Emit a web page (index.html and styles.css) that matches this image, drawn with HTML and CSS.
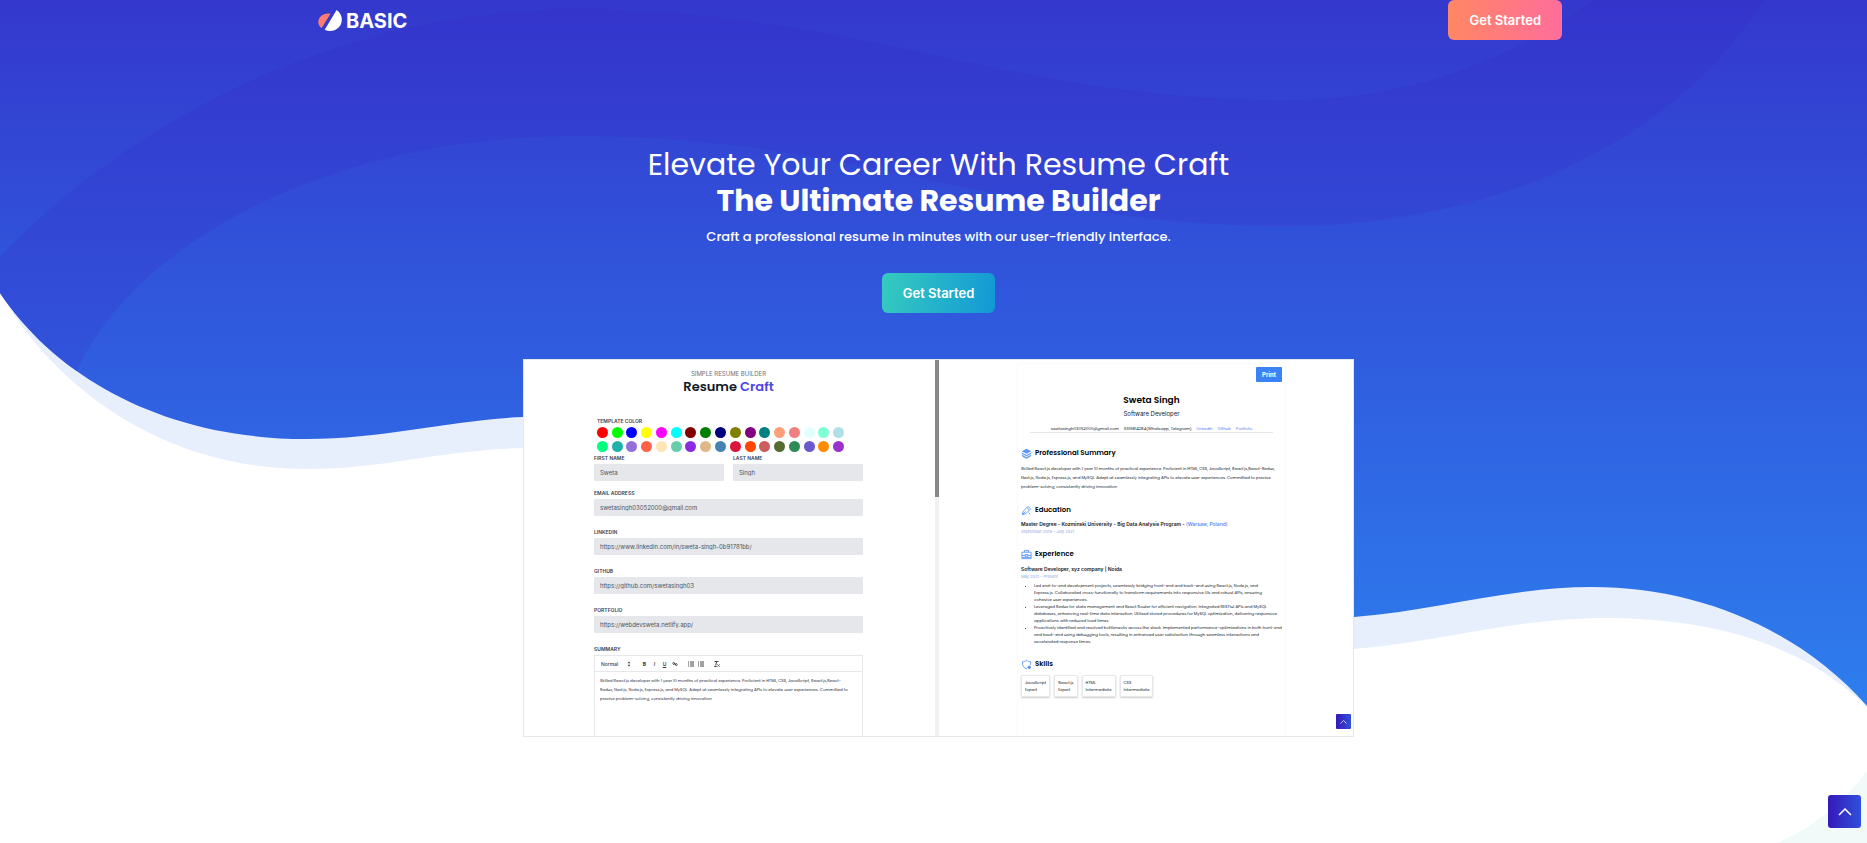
FILE: index.html
```html
<!DOCTYPE html>
<html lang="en">
<head>
<meta charset="utf-8">
<meta name="viewport" content="width=device-width, initial-scale=1">
<title>Resume Craft</title>
<link rel="stylesheet" href="styles.css">
</head>
<body>
<div class="page">
  <svg class="waves" viewBox="0 0 1867 843" preserveAspectRatio="none" aria-hidden="true">
    <defs>
      <linearGradient id="base" gradientUnits="userSpaceOnUse" x1="0" y1="0" x2="0" y2="706">
        <stop offset="0" stop-color="#3438cd"/><stop offset=".42" stop-color="#3057dc"/><stop offset="1" stop-color="#2e7eee"/>
      </linearGradient>
      <linearGradient id="band" gradientUnits="userSpaceOnUse" x1="0" y1="0" x2="0" y2="371">
        <stop offset="0" stop-color="#3434cb"/><stop offset="1" stop-color="#3154db"/>
      </linearGradient>
      <clipPath id="hero-clip">
        <path d="M0 0V293C60 382 170 439 306 439C385 439 450 420 523 417L1354 617C1440 610 1510 587 1592 587C1695 587 1797 627 1867 706V0Z"/>
      </clipPath>
    </defs>
    <path fill="#e7eefc" d="M0 293C60 395 170 469 306 469C385 469 440 450 523 448L1354 649C1440 642 1515 618 1606 618C1705 618 1800 641 1867 707V0H0Z"/>
    <g clip-path="url(#hero-clip)">
      <rect width="1867" height="720" fill="url(#base)"/>
      <path fill="url(#band)" d="M0 257C115 135 320 12 571 9C860 9 1010 100 1284 100C1410 100 1510 60 1593 0H1764C1668 152 1480 226 1286 226C1010 226 860 136 577 136C320 136 130 250 77 371L60 420H0Z"/>
    </g>
    <path fill="#f1faf9" d="M1867 771C1842 803 1816 826 1777 843H1867Z"/>
  </svg>

  <header class="header">
    <a class="brand" href="#top">
      <svg class="brand-mark" viewBox="0 0 24 22" aria-hidden="true">
        <path fill="#ff7d6e" d="M12.500 3.800C6 2-.5 7 .4 13c.4 2.500 1.600 4 3.300 5.100Z"/>
        <path fill="#fff" d="M18.600 0C25 4.500 25.300 12.500 20.800 17.300C16.500 21.600 11 22 6.700 19.800Z"/>
      </svg>
      <span>BASIC</span>
    </a>
    <a class="btn btn-coral" href="#start">Get Started</a>
  </header>

  <main class="hero" id="top">
    <h1 class="headline">Elevate Your Career With Resume Craft <strong>The Ultimate Resume Builder</strong></h1>
    <p class="tagline">Craft a professional resume in minutes with our user-friendly interface.</p>
    <a class="btn btn-teal" id="start" href="#builder">Get Started</a>

    <section class="shot" id="builder" aria-label="Resume builder">
      <form class="builder">
        <p class="eyebrow">SIMPLE RESUME BUILDER</p>
        <h2 class="title">Resume <span>Craft</span></h2>
        <p class="label label-swatches">TEMPLATE COLOR</p>
        <div class="swatches">
          <button type="button" class="dot" aria-label="Red" style="background:#ff0000"></button>
          <button type="button" class="dot" aria-label="Lime" style="background:#00ff00"></button>
          <button type="button" class="dot" aria-label="Blue" style="background:#0000ff"></button>
          <button type="button" class="dot" aria-label="Yellow" style="background:#ffff00"></button>
          <button type="button" class="dot" aria-label="Magenta" style="background:#ff00ff"></button>
          <button type="button" class="dot" aria-label="Cyan" style="background:#00ffff"></button>
          <button type="button" class="dot" aria-label="Maroon" style="background:#800000"></button>
          <button type="button" class="dot" aria-label="Green" style="background:#008000"></button>
          <button type="button" class="dot" aria-label="Navy" style="background:#000080"></button>
          <button type="button" class="dot" aria-label="Olive" style="background:#808000"></button>
          <button type="button" class="dot" aria-label="Purple" style="background:#800080"></button>
          <button type="button" class="dot" aria-label="Teal" style="background:#008080"></button>
          <button type="button" class="dot" aria-label="Light salmon" style="background:#ffa07a"></button>
          <button type="button" class="dot" aria-label="Light coral" style="background:#f08080"></button>
          <button type="button" class="dot" aria-label="Light cyan" style="background:#e0ffff"></button>
          <button type="button" class="dot" aria-label="Aquamarine" style="background:#7fffd4"></button>
          <button type="button" class="dot" aria-label="Powder blue" style="background:#b0e0e6"></button>
          <button type="button" class="dot" aria-label="Spring green" style="background:#00ff7f"></button>
          <button type="button" class="dot" aria-label="Light sea green" style="background:#20b2aa"></button>
          <button type="button" class="dot" aria-label="Medium purple" style="background:#9370db"></button>
          <button type="button" class="dot" aria-label="Tomato" style="background:#ff6347"></button>
          <button type="button" class="dot" aria-label="Moccasin" style="background:#ffe4b5"></button>
          <button type="button" class="dot" aria-label="Medium aquamarine" style="background:#66cdaa"></button>
          <button type="button" class="dot" aria-label="Blue violet" style="background:#8a2be2"></button>
          <button type="button" class="dot" aria-label="Burlywood" style="background:#deb887"></button>
          <button type="button" class="dot" aria-label="Steel blue" style="background:#4682b4"></button>
          <button type="button" class="dot" aria-label="Crimson" style="background:#dc143c"></button>
          <button type="button" class="dot" aria-label="Orange red" style="background:#ff4500"></button>
          <button type="button" class="dot" aria-label="Indian red" style="background:#cd5c5c"></button>
          <button type="button" class="dot" aria-label="Dark olive green" style="background:#556b2f"></button>
          <button type="button" class="dot" aria-label="Sea green" style="background:#2e8b57"></button>
          <button type="button" class="dot" aria-label="Slate blue" style="background:#6a5acd"></button>
          <button type="button" class="dot" aria-label="Dark orange" style="background:#ff8c00"></button>
          <button type="button" class="dot" aria-label="Dark orchid" style="background:#9932cc"></button>
        </div>
        <div class="names">
          <div class="field"><label class="label" for="first">FIRST NAME</label><input class="input" id="first" value="Sweta"></div>
          <div class="field"><label class="label" for="last">LAST NAME</label><input class="input" id="last" value="Singh"></div>
        </div>
        <div class="field field-email"><label class="label" for="email">EMAIL ADDRESS</label><input class="input" id="email" value="swetasingh03052000@gmail.com"></div>
        <div class="field field-row"><label class="label" for="linkedin">LINKEDIN</label><input class="input" id="linkedin" value="https://www.linkedin.com/in/sweta-singh-0b91781bb/"></div>
        <div class="field field-row"><label class="label" for="github">GITHUB</label><input class="input" id="github" value="https://github.com/swetasingh03"></div>
        <div class="field field-row"><label class="label" for="portfolio">PORTFOLIO</label><input class="input" id="portfolio" value="https://webdevsweta.netlify.app/"></div>
        <div class="field field-row">
          <p class="label">SUMMARY</p>
          <div class="editor">
            <div class="toolbar">
              <select class="style-select" aria-label="Text style"><option>Normal</option></select>
              <svg class="updown" viewBox="0 0 4 6" aria-hidden="true"><path d="M.5 2.300L2 .5l1.500 1.800ZM.5 3.700L2 5.500l1.500-1.800Z"/></svg>
              <button type="button" class="tool tool-bold">B</button>
              <button type="button" class="tool tool-italic">I</button>
              <button type="button" class="tool tool-underline">U</button>
              <button type="button" class="tool" aria-label="Link"><svg viewBox="0 0 6 6"><path d="M3.300 2.700L2.300 1.700a.8.8 0 0 0-1.200 1.200l1 1M2.700 3.300l1 1a.8.8 0 0 0 1.200-1.200l-1-1M2 2l2 2"/></svg></button>
              <button type="button" class="tool tool-list" aria-label="Numbered list"><svg viewBox="0 0 6 6"><path d="M0 1h1M2 1h4M0 3h1M2 3h4M0 5h1M2 5h4"/></svg></button>
              <button type="button" class="tool" aria-label="Bullet list"><svg viewBox="0 0 6 6"><path d="M0 1h1M2 1h4M0 3h1M2 3h4M0 5h1M2 5h4"/></svg></button>
              <button type="button" class="tool tool-clear" aria-label="Clear formatting"><svg viewBox="0 0 6 6"><path d="M.5.5h4M2.700.5l-1 4M.3 5.500h2.400M3.500 3.500l2 2M5.500 3.500l-2 2"/></svg></button>
            </div>
            <p class="copy editor-copy">Skilled React.js developer with 1 year 10 months of practical experience. Proficient in HTML, CSS, JavaScript, React.js,React-<br>Redux, Next.js, Node.js, Express.js, and MySQL. Adept at seamlessly integrating APIs to elevate user experiences. Committed to<br>precise problem-solving, consistently driving innovation</p>
          </div>
        </div>
      </form>

      <div class="track"><div class="thumb"></div></div>

      <div class="preview">
        <article class="paper">
          <button type="button" class="print">Print</button>
          <h2 class="name">Sweta Singh</h2>
          <p class="role">Software Developer</p>
          <p class="contact"><span>swetasingh03052000@gmail.com</span><span>9319814284(Whatsapp, Telegram)</span><a href="#li">LinkedIn</a><a href="#gh">Github</a><a href="#pf">Portfolio</a></p>

          <h3 class="section section-first"><svg class="icon" viewBox="0 0 12 12" aria-hidden="true"><path fill="#5b97f8" d="M6 .8L11.200 3.500 6 6.300.8 3.500ZM.8 4.800L6 7.500l5.200-2.700v1.400L6 9 .8 6.200ZM.8 7.200L6 10l5.200-2.800C11 9.500 9 10.500 6 11.600 3 10.500 1 9.500.8 7.200Z"/></svg>Professional Summary</h3>
          <p class="copy summary">Skilled React.js developer with 1 year 10 months of practical experience. Proficient in HTML, CSS, JavaScript, React.js,React-Redux,<br>Next.js, Node.js, Express.js, and MySQL. Adept at seamlessly integrating APIs to elevate user experiences. Committed to precise<br>problem-solving, consistently driving innovation</p>

          <h3 class="section"><svg class="icon icon-line" viewBox="0 0 12 12" aria-hidden="true"><path d="M1.500 10.500L2.500 6.800 7.800 1.500 10.500 4.200 5.200 9.500ZM6.500 2.800l2.700 2.700M1.500 10.500L5 7M8.500 8.500l1.500 1.500"/></svg>Education</h3>
          <p class="item item-edu">Master Degree - Kozminski University - Big Data Analysis Program - <span>(Warsaw, Poland)</span></p>
          <p class="date">September 2019 – July 2021</p>

          <h3 class="section"><svg class="icon icon-line" viewBox="0 0 12 12" aria-hidden="true"><path d="M1 3.500h10v7H1ZM3.800 3.500v-2h4.400v2M1 7h3.500M7.500 7H11M4.500 6h3v2h-3ZM1 9.200h10"/></svg>Experience</h3>
          <p class="item item-job">Software Developer, xyz company | Noida</p>
          <p class="date">May 2021 – Present</p>
          <ul class="duties">
            <li>Led end-to-end development projects, seamlessly bridging front-end and back-end using React.js, Node.js, and<br>Express.js. Collaborated cross-functionally to transform requirements into responsive UIs and robust APIs, ensuring<br>cohesive user experiences.</li>
            <li>Leveraged Redux for state management and React Router for efficient navigation. Integrated RESTful APIs and MySQL<br>databases, enhancing real-time data interaction. Utilized stored procedures for MySQL optimization, delivering responsive<br>applications with reduced load times.</li>
            <li>Proactively identified and resolved bottlenecks across the stack. Implemented performance-optimizations in both front-end<br>and back-end using debugging tools, resulting in enhanced user satisfaction through seamless interactions and<br>accelerated response times.</li>
          </ul>

          <h3 class="section"><svg class="icon icon-line" viewBox="0 0 12 12" aria-hidden="true"><path d="M6.500 10.800C3 10 1.500 7.500 1.500 3 3.500 3 5 2.300 6 1.200 7 2.300 8.500 3 10.500 3c0 1.500 0 2.500-.3 3.500"/><circle cx="9" cy="9" r="1.400" fill="#4d8df6"/></svg>Skills</h3>
          <ul class="skills">
            <li>JavaScript<br>Expert</li><li>React.js<br>Expert</li><li>HTML<br>Intermediate</li><li>CSS<br>Intermediate</li>
          </ul>
        </article>
        <a class="up up-small" href="#builder" aria-label="Back to builder top"><svg viewBox="0 0 14 8"><path d="M1 7l6-6 6 6"/></svg></a>
      </div>
    </section>
  </main>

  <a class="up up-large" href="#top" aria-label="Back to top"><svg viewBox="0 0 14 8"><path d="M1 7l6-6 6 6"/></svg></a>
</div>
</body>
</html>
```
FILE: styles.css
```css
*, *::before, *::after { box-sizing: border-box; }
body, h1, h2, h3, p, ul { margin: 0; padding: 0; }
ul { list-style: none; }
a { text-decoration: none; }
button, input, select { font: inherit; border: 0; padding: 0; margin: 0; background: none; }
body { font-family: Poppins, Inter, sans-serif; background: #fff; }

.page { position: relative; min-height: 100vh; padding-left: 10px; overflow: hidden; }
.waves { position: absolute; inset: 0; width: 100%; height: 100%; }

.header {
  position: relative;
  display: flex;
  justify-content: space-between;
  max-width: 1247px;
  margin: 0 auto;
}
.brand { display: flex; align-items: center; gap: 4px; height: 42px; padding-left: 3px; color: #fff; font: 700 20px/24px Inter, sans-serif; }
.brand-mark { width: 24px; height: 22px; }

.btn {
  display: flex;
  align-items: center;
  justify-content: center;
  height: 40px;
  padding: 0 21px;
  border-radius: 6px;
  color: #fff;
  font: 600 13px/20px Inter, sans-serif;
}
.btn-coral { background: linear-gradient(90deg, #ff8764, #ff6d9b); }
.btn-teal { background: linear-gradient(100deg, #36cbbf, #1298d6); }

.hero { position: relative; display: flex; flex-direction: column; align-items: center; padding: 105px 16px 0; }
.headline { color: #fff; font-size: 30px; font-weight: 400; line-height: 36px; text-align: center; }
.headline strong { display: block; font-weight: 700; }
.tagline { margin: 6px 0 24px; color: #fff; font-size: 13px; font-weight: 500; line-height: 24px; }

.shot {
  display: flex;
  width: 100%;
  max-width: 831px;
  aspect-ratio: 831 / 378;
  margin-top: 46px;
  border: 1px solid #e5e7eb;
  background: #fff;
  color: #1f2937;
  font-family: Inter, sans-serif;
  overflow: hidden;
  white-space: nowrap;
}
.builder { flex: 0 0 411px; padding: 10px 72px 0 70px; min-height: 0; }
.eyebrow { color: #6b7280; font-size: 6px; line-height: 8px; text-align: center; }
.title { color: #111827; font-family: Poppins, sans-serif; font-size: 13px; font-weight: 600; line-height: 18px; text-align: center; }
.title span { color: #4f46e5; }
.label { display: block; color: #374151; font-size: 5px; font-weight: 600; line-height: 6px; }
.label-swatches { margin: 22px 0 3px 3px; }
.swatches { display: grid; grid-template-columns: repeat(17, 1fr); gap: 3px 0; margin: 0 17px 3px 1px; justify-items: center; }
.dot { width: 11px; height: 11px; border-radius: 50%; }
.names { display: grid; grid-template-columns: 1fr 1fr; gap: 9px; }
.input { display: block; width: 100%; height: 17px; margin-top: 3px; padding: 0 6px; border-radius: 1px; background: #e5e7eb; color: #4b5563; font-size: 6px; }
.field-email { margin-top: 9px; }
.field-row { margin-top: 13px; }
.editor { height: 90px; margin-top: 3px; border: 1px solid #e5e7eb; }
.toolbar { display: flex; align-items: center; height: 16px; padding-left: 6px; border-bottom: 1px solid #e5e7eb; color: #444; font-size: 5px; }
.style-select { width: 26px; appearance: none; color: #444; font-weight: 500; }
.updown { width: 4px; height: 6px; margin-right: 10px; fill: #444; }
.tool { width: 7px; height: 8px; margin-right: 3px; color: #444; line-height: 8px; text-align: center; }
.tool svg { display: block; width: 6px; height: 6px; margin: 1px auto; fill: none; stroke: #444; stroke-width: 1; }
.tool-bold { font-weight: 800; }
.tool-italic { font-style: italic; font-weight: 600; }
.tool-underline { text-decoration: underline; font-weight: 600; }
.tool-list { margin-left: 6px; }
.tool-clear { margin-left: 6px; }
.copy { font-family: Poppins, sans-serif; font-size: 4px; line-height: 9px; }
.editor-copy { padding: 4px 5px; }

.track { width: 4px; background: #f1f1f1; }
.thumb { height: 137px; background: #888; }

.preview { position: relative; flex: 1; padding: 3px 67px 0 78px; color: #111827; }
.paper { height: 100%; padding: 3px 3px 0 3px; border: solid #f9fafb; border-width: 1px 1px 0; }
.print { display: block; width: 26px; height: 15px; margin-left: auto; border-radius: 1px; background: #3b82f6; color: #fff; font-size: 6px; font-weight: 700; text-align: center; }
.name { margin-top: 11px; color: #000; font-family: Poppins, sans-serif; font-size: 9px; font-weight: 600; line-height: 14px; text-align: center; }
.role { margin-top: 2px; font-size: 6px; line-height: 10px; text-align: center; }
.contact { display: flex; justify-content: center; gap: 5px; margin: 7px 9px 0; border-bottom: 1px solid #e5e7eb; font-family: Poppins, sans-serif; font-size: 4px; line-height: 6px; }
.contact a { color: #4f7df3; }
.section { display: flex; align-items: center; gap: 3px; height: 12px; margin-top: 13px; color: #000; font-family: Poppins, sans-serif; font-size: 7px; font-weight: 600; line-height: 12px; }
.section-first { margin-top: 14px; }
.icon { width: 11px; height: 11px; }
.icon-line { fill: none; stroke: #5b97f8; stroke-width: 1; }
.summary { margin-top: 5px; }
.item { font-size: 5px; font-weight: 600; line-height: 7px; }
.item span { color: #4f7df3; font-weight: 500; }
.item-edu { margin-top: 5px; }
.item-job { margin-top: 6px; }
.date { margin-top: 1px; color: #8fa6dc; font-size: 4px; line-height: 6px; }
.duties { margin-top: 2px; padding-left: 13px; font-family: Poppins, sans-serif; font-size: 4px; line-height: 7px; list-style: disc; }
.skills { display: flex; gap: 4px; margin-top: 5px; font-family: Poppins, sans-serif; font-size: 4px; line-height: 7px; }
.skills li { padding: 3px; border: 1px solid #e5e7eb; border-radius: 1px; box-shadow: 0 1px 2px #0003; }

.up { position: absolute; display: flex; align-items: center; justify-content: center; background: linear-gradient(90deg, #3519ba, #3150dc); }
.up svg { fill: none; stroke: #fff; stroke-width: 1.5; }
.up-small { right: 2px; bottom: 7px; width: 15px; height: 15px; border-radius: 1px; }
.up-small svg { width: 7px; height: 4px; }
.up-large { right: 6px; bottom: 15px; width: 33px; height: 33px; border-radius: 3px; }
.up-large svg { width: 14px; height: 8px; }
```
